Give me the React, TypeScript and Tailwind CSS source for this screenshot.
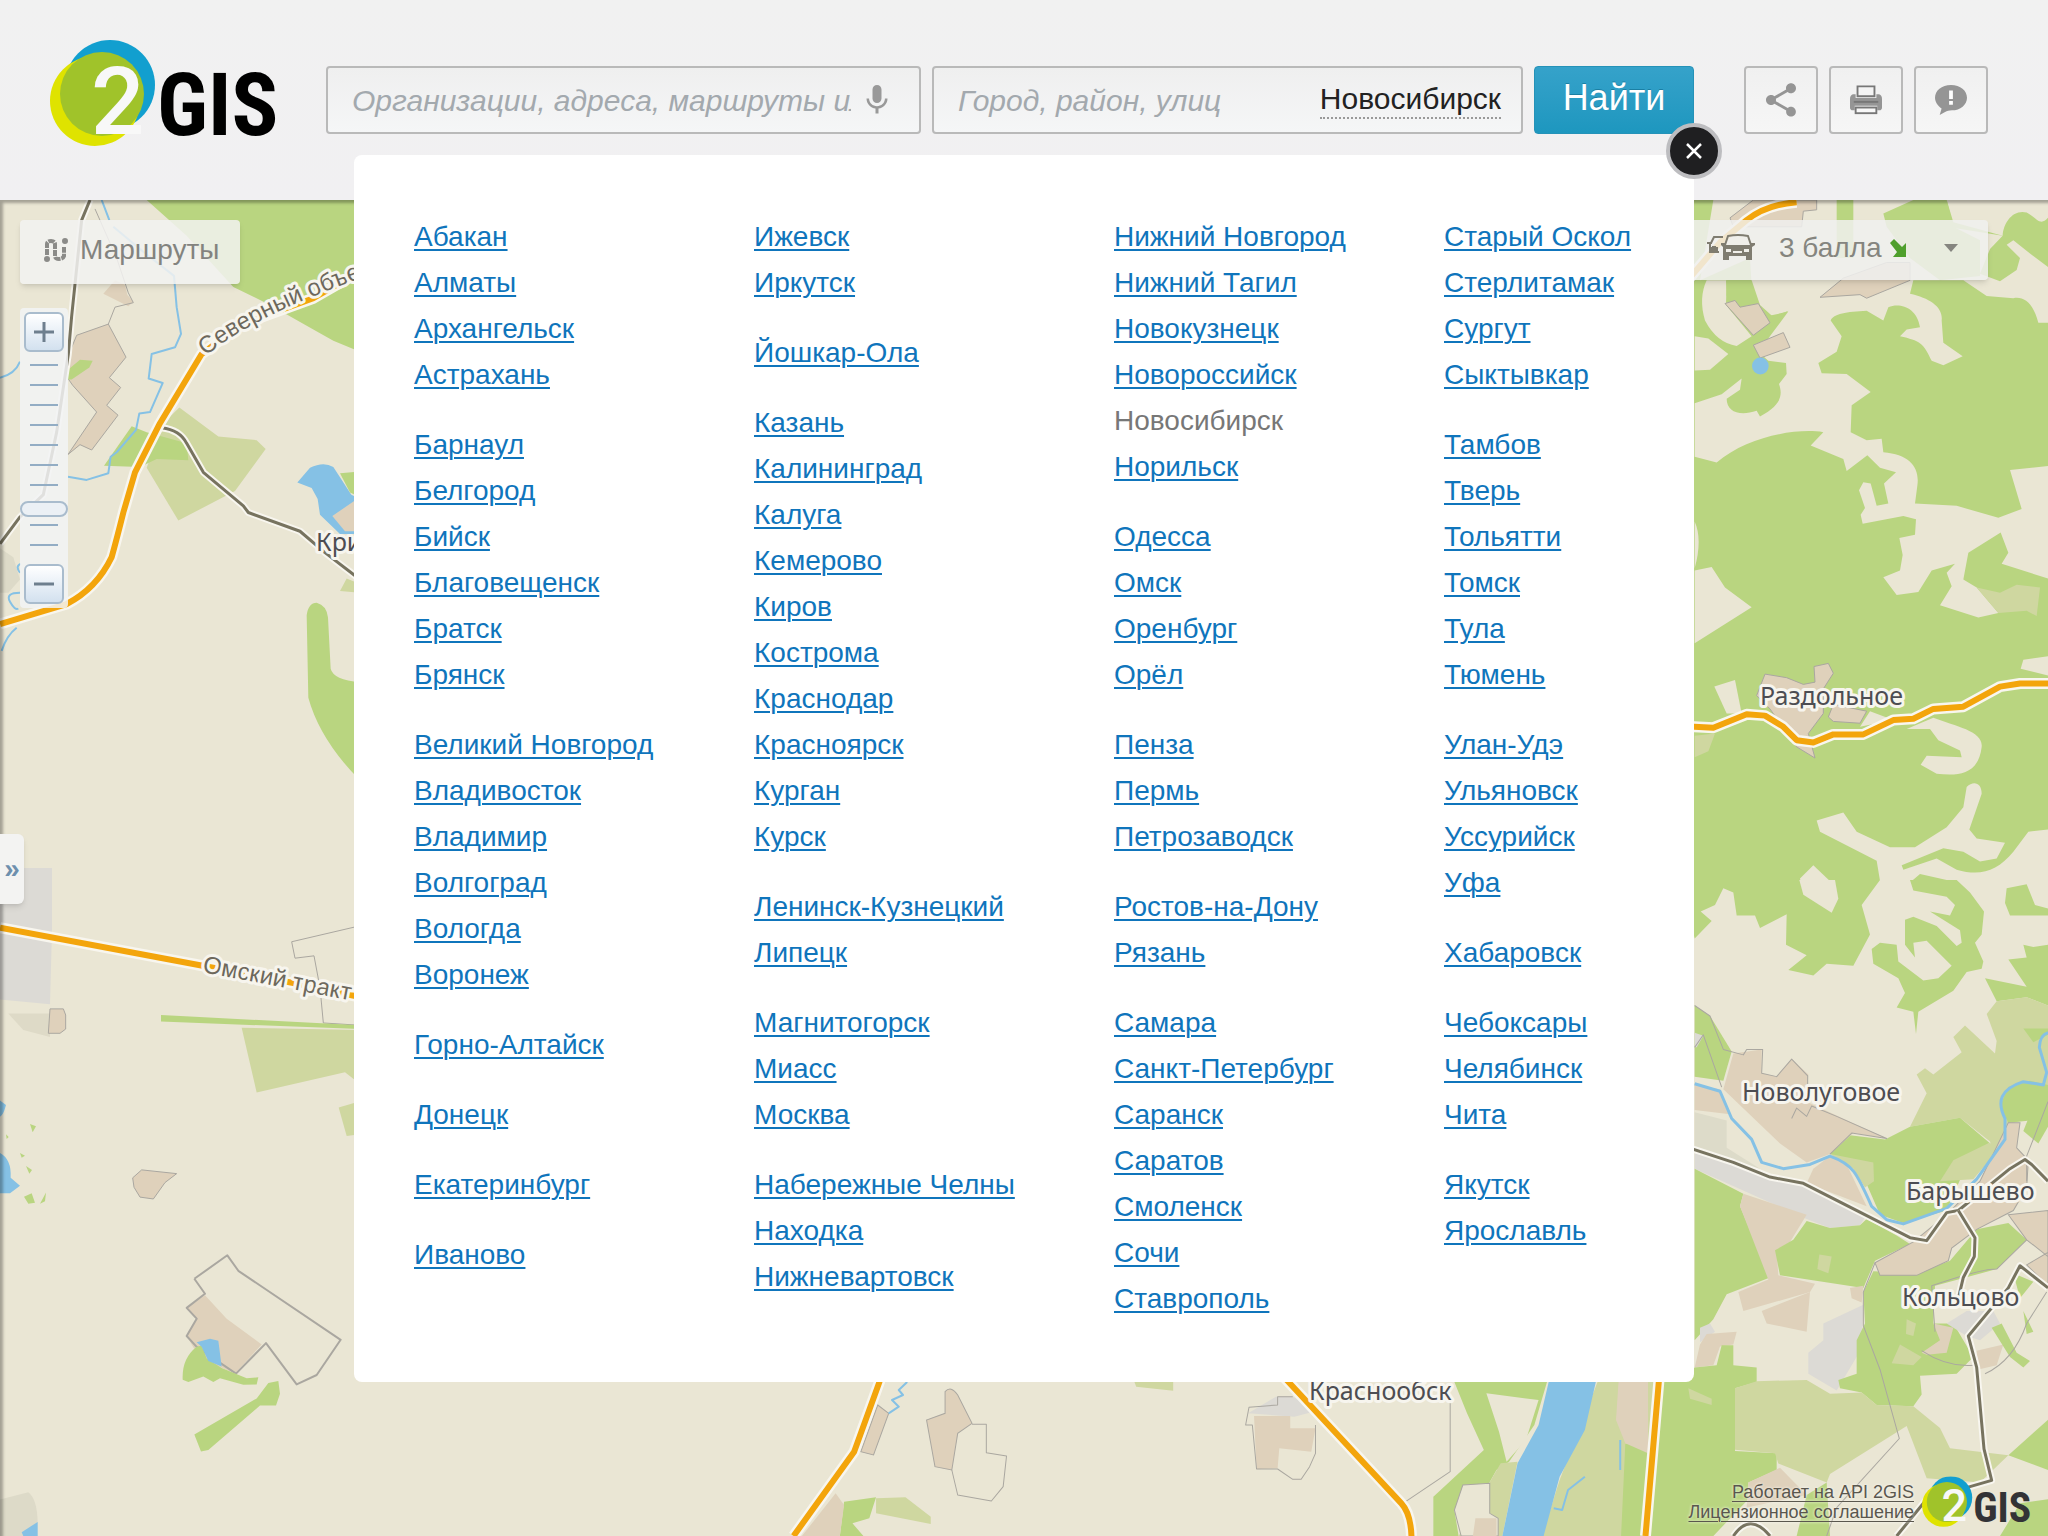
import { useState } from 'react';
import type { ReactNode } from 'react';
import { MdMic, MdShare } from 'react-icons/md';

const CURRENT_CITY = 'Новосибирск';

// Cities by column, then by first letter
const cityColumns: string[][][] = [
  [
    ['Абакан', 'Алматы', 'Архангельск', 'Астрахань'],
    ['Барнаул', 'Белгород', 'Бийск', 'Благовещенск', 'Братск', 'Брянск'],
    ['Великий Новгород', 'Владивосток', 'Владимир', 'Волгоград', 'Вологда', 'Воронеж'],
    ['Горно-Алтайск'],
    ['Донецк'],
    ['Екатеринбург'],
    ['Иваново'],
  ],
  [
    ['Ижевск', 'Иркутск'],
    ['Йошкар-Ола'],
    ['Казань', 'Калининград', 'Калуга', 'Кемерово', 'Киров', 'Кострома', 'Краснодар', 'Красноярск', 'Курган', 'Курск'],
    ['Ленинск-Кузнецкий', 'Липецк'],
    ['Магнитогорск', 'Миасс', 'Москва'],
    ['Набережные Челны', 'Находка', 'Нижневартовск'],
  ],
  [
    ['Нижний Новгород', 'Нижний Тагил', 'Новокузнецк', 'Новороссийск', 'Новосибирск', 'Норильск'],
    ['Одесса', 'Омск', 'Оренбург', 'Орёл'],
    ['Пенза', 'Пермь', 'Петрозаводск'],
    ['Ростов-на-Дону', 'Рязань'],
    ['Самара', 'Санкт-Петербург', 'Саранск', 'Саратов', 'Смоленск', 'Сочи', 'Ставрополь'],
  ],
  [
    ['Старый Оскол', 'Стерлитамак', 'Сургут', 'Сыктывкар'],
    ['Тамбов', 'Тверь', 'Тольятти', 'Томск', 'Тула', 'Тюмень'],
    ['Улан-Удэ', 'Ульяновск', 'Уссурийск', 'Уфа'],
    ['Хабаровск'],
    ['Чебоксары', 'Челябинск', 'Чита'],
    ['Якутск', 'Ярославль'],
  ],
];

const LAND = '#eae6d4';
const FOREST = '#b9d580';
const FIELD = '#cfd7a0';
const TOWN = '#dfd1bb';
const INDUSTRY = '#dcdad5';
const WATER = '#85c1e5';
const OUTLINE = '#aaa7a0';

function Logo({ className, color = '#000' }: { className: string; color?: string }) {
  return (
    <svg viewBox="0 0 230 108" className={className} overflow="visible" role="img" aria-label="2GIS">
      <clipPath id="logo-cut">
        <path d="M0 0H110V83H88L78 94V108H0Z" />
      </clipPath>
      <g clipPath="url(#logo-cut)">
        <circle cx="60" cy="45" r="45" fill="#129fcf" />
        <circle cx="45" cy="61" r="45" fill="#dfe300" />
        <circle cx="52" cy="54" r="42" fill="#a0c32a" />
      </g>
      <text x="41" y="94" fontSize="94" fontWeight="500" fontFamily="Roboto, sans-serif" fill="#f8f8f8">2</text>
      <text x="107" y="95" fontSize="87" fontWeight="700" fontFamily="'Liberation Sans Narrow', 'Roboto Condensed', Roboto, sans-serif" fill={color}>GIS</text>
    </svg>
  );
}

function PrinterIcon() {
  return (
    <svg viewBox="0 0 34 32" className="h-8 w-8" aria-hidden="true">
      <path d="M8 12V1.5H26V12Z" fill="#f4f4f4" stroke="#777" strokeWidth="2" />
      <path d="M3 10H6V14H28V10H31Q34 11 34 15V24Q34 27 31 27H29V22H5V27H3Q0 27 0 24V15Q0 11 3 10Z" fill="#959595" />
      <path d="M4 18H30" stroke="#777" strokeWidth="2" />
      <rect x="6" y="24" width="22" height="6" fill="#f8f8f8" stroke="#777" strokeWidth="2" />
    </svg>
  );
}

function FeedbackIcon() {
  return (
    <svg viewBox="0 0 34 34" className="h-8 w-8" aria-hidden="true">
      <path d="M17 1C27 1 34 7 34 14.5S27 28 18 28C12 28 9 31 5 33L7 26C3 23 0 19 0 14.500C0 7 7 1 17 1Z" fill="#959595" />
      <path d="M17 7V16M17 18V22" stroke="#fff" strokeWidth="4" />
    </svg>
  );
}

function RoutesIcon() {
  return (
    <svg viewBox="0 0 24 24" className="h-6 w-6" fill="none" stroke="#8b8b88" aria-hidden="true">
      <path d="M3 17V6Q3 3 7 3T11 6V18Q11 21 15 21T20 18V9" strokeWidth="4" strokeDasharray="6 1" />
      <circle cx="3" cy="21" r="2" strokeWidth="2" fill="#8b8b88" />
      <circle cx="21" cy="3" r="2" strokeWidth="2" fill="#8b8b88" />
    </svg>
  );
}

function CarsIcon() {
  return (
    <svg viewBox="0 0 48 28" className="h-7 w-12" aria-hidden="true">
      <path d="M4 9L7 3H16M0 9H5M3 10V18H12M5 13H9" fill="none" stroke="#7f7c70" strokeWidth="2" />
      <rect x="3" y="13" width="8" height="5" fill="#7f7c70" />
      <path d="M18 11L21 2Q31 0 41 2L44 11" fill="#f0efe9" fillOpacity="0.6" stroke="#7f7c70" strokeWidth="2" />
      <path d="M14 9H19V11H43V9H48V11L45 13V26H39V22H22V26H16V13L14 11Z" fill="#7f7c70" />
      <path d="M19 15H24V18H19ZM37 15H42V18H37ZM26 17H35V19H26Z" fill="#f0efe9" />
    </svg>
  );
}

type TileProps = { x: number; y: number; width: number; height: number; viewBox: string; children: ReactNode };

function Tile({ viewBox, children, ...box }: TileProps) {
  return (
    <svg {...box} viewBox={viewBox} preserveAspectRatio="none">
      {children}
    </svg>
  );
}

function Area({ d, fill, outlined = false }: { d: string; fill: string; outlined?: boolean }) {
  return <path d={d} fill={fill} stroke={outlined ? OUTLINE : 'none'} strokeWidth="1" vectorEffect="non-scaling-stroke" />;
}

function Line({ d, color, width, casing = 0 }: { d: string; color: string; width: number; casing?: number }) {
  return (
    <g fill="none" strokeLinejoin="round">
      {casing > 0 && <path d={d} stroke="#f8f6ef" strokeWidth={casing} vectorEffect="non-scaling-stroke" />}
      <path d={d} stroke={color} strokeWidth={width} vectorEffect="non-scaling-stroke" />
    </g>
  );
}

function Highway({ d }: { d: string }) {
  return <Line d={d} color="#f3a50c" width={6} casing={11} />;
}

function Road({ d }: { d: string }) {
  return <Line d={d} color="#77735f" width={3} casing={7} />;
}

const places = [
  { name: 'Кри', x: 316, y: 351 },
  { name: 'Раздольное', x: 1760, y: 505 },
  { name: 'Новолуговое', x: 1742, y: 901 },
  { name: 'Барышево', x: 1906, y: 1000 },
  { name: 'Кольцово', x: 1902, y: 1106 },
  { name: 'Краснообск', x: 1309, y: 1200 },
];

function CityMap() {
  return (
    <svg viewBox="0 0 2048 1336" preserveAspectRatio="xMidYMin slice" className="absolute inset-0 h-full w-full" role="img" aria-label="Карта">
      <rect width="2048" height="1336" fill={LAND} />

      {/* North-west */}
      <Tile x={0} y={0} width={360} height={700} viewBox="0 0 1080 1568">
        <Area d="M440 0H1080V340L1000 315L940 290L810 235L700 195L560 80Z" fill={FOREST} />
        <Area d="M230 303L325 278L378 352L328 398L362 420L320 460L354 482L275 560L240 548L204 570L290 475L218 415L204 400V350Z" fill={TOWN} outlined />
        <Area d="M310 210L345 180L375 190L382 212L400 228L385 238Z" fill={TOWN} />
        <Area d="M204 380L240 358L278 360L268 375L215 402H204Z" fill={FOREST} />
        <Area d="M538 465L655 530L770 538L797 558L705 652L535 718L440 600L490 500Z" fill={FIELD} />
        <Area d="M312 595L395 507L440 520L560 545L565 583L470 580L420 598Z" fill={FOREST} />
        <Area d="M892 633L930 600Q970 585 1000 598L1054 660L1080 670V748H1020L960 705L953 670L935 645Z" fill={WATER} />
        <Area d="M1020 612L1080 608V665L1050 655Z" fill={FOREST} />
        <Area d="M997 708L1080 665V742H1035Z" fill={TOWN} />
        <Area d="M920 930Q925 902 950 902Q980 908 984 935L992 1050Q1000 1075 1080 1080V1300Q960 1210 925 1115Z" fill={FOREST} />
        <Area d="M1040 848L1080 860V880L1020 876Z" fill={FIELD} />
        <Area d="M0 1497H156V1568H0Z" fill={INDUSTRY} />
        <Area d="M0 780L40 800L60 850L25 880H0Z" fill="#dddac8" />
        <Line d="M305 0L328 45M340 60L420 110L522 170L530 240L543 300L525 330L455 345L446 400L488 410L450 475L418 478L408 515L350 565L332 575L325 612L260 627L204 620M0 398Q45 390 60 362M5 1010Q20 975 50 958M60 880Q15 880 30 900T55 915M62 815Q45 820 60 835" color={WATER} width={2} />
        <Line d="M285 20L350 130L385 208L400 230L345 240L325 278" color={OUTLINE} width={1} />
        <Road d="M270 0L245 45L215 260L205 345L170 520L130 660L60 710L0 770" />
        <Road d="M485 510Q540 515 560 545L610 610L730 685L745 700L900 742L975 790L1080 850" />
        <Highway d="M0 950L200 905Q290 870 335 800Q350 760 370 700L405 610L480 500L605 345L720 280L940 220L1080 160" />
      </Tile>

      {/* South-west */}
      <Tile x={0} y={600} width={360} height={736} viewBox="0 0 1080 1568">
        <Area d="M0 145H156V275L150 435L0 425Z" fill={INDUSTRY} />
        <Area d="M25 455H150V505L70 490Z" fill="#dedac7" />
        <Area d="M150 445H190L197 458V488L180 497H145Z" fill={TOWN} outlined />
        <Line d="M1080 268L875 302L885 337L942 332L960 400L970 475L1080 480" color={OUTLINE} width={1} />
        <Area d="M725 485L1080 490V605L1035 580L770 623Z" fill={FIELD} />
        <Area d="M483 458L1080 480V488L483 472Z" fill={FOREST} />
        <Area d="M1016 655L1080 642V712L1040 716Z" fill={FIELD} />
        <Area d="M0 640L18 650Q10 672 0 675ZM0 752Q35 765 32 805L60 822L30 838H0Z" fill={WATER} />
        <Area d="M90 690L108 695L98 708ZM60 752L75 758L65 762ZM78 780L96 788L88 796ZM72 845L95 838L105 858L85 860ZM120 860L138 836L135 855ZM18 712L26 718L20 722Z" fill={FOREST} />
        <Area d="M398 805L425 788L530 796L495 815L460 850L420 846L402 825Z" fill={TOWN} outlined />
        <Area d="M615 1055L680 1105L785 1160L705 1222L600 1190L560 1142L590 1105L560 1082Z" fill={TOWN} />
        <Line d="M583 1020L682 970L715 1003L1022 1150L950 1225L890 1245L798 1157L708 1222L590 1165L560 1142L590 1105L560 1082L615 1052L583 1020" color={OUTLINE} width={2} />
        <Area d="M548 1235Q545 1190 590 1165L605 1162L620 1190L665 1210L740 1232L775 1230L770 1245L730 1246L660 1232L640 1240L610 1228L565 1240Z" fill={FOREST} />
        <Area d="M590 1155L630 1148L655 1152L665 1207L625 1195L605 1165Z" fill={WATER} />
        <Area d="M583 1352L770 1275L805 1242L835 1238L840 1265L828 1290L780 1290L625 1385L603 1388Z" fill={FOREST} />
        <Area d="M0 1490L85 1475Q112 1490 113 1540L70 1568H0Z" fill="#dddac8" />
        <Area d="M65 1560L113 1538V1568H70Z" fill={WATER} />
        <Highway d="M0 272L600 352L880 390L1080 420" />
      </Tile>

      {/* Strip below the city list */}
      <Tile x={360} y={1170} width={1320} height={166} viewBox="0 0 1568 498">
        <Area d="M615 105L628 130L610 255L595 245Z" fill={TOWN} outlined />
        <Area d="M695 65Q702 45 710 75L727 160L710 190L703 300L683 290L673 150L695 130Z" fill={TOWN} outlined />
        <Line d="M727 163H744V248L768 258L764 350L750 393L710 375L703 300" color={OUTLINE} width={1} />
        <Area d="M575 395L613 382L605 445L585 460L598 498H570Z" fill={FOREST} />
        <Area d="M613 385L648 382L678 440V462L613 430Z" fill={FIELD} />
        <Area d="M565 370L575 405L570 498H525Z" fill={TOWN} />
        <Area d="M920 36H966V62L922 50Z" fill={FIELD} />
        <Area d="M1088 80H1108L1140 120L1110 140L1055 130Z" fill={INDUSTRY} />
        <Area d="M1062 138H1105V175H1135L1130 245L1092 235L1090 295L1065 298Z" fill={TOWN} />
        <Line d="M1108 80H1090V105L1056 112L1052 165H1060L1065 297H1090L1108 328H1118L1128 290L1135 250V165M1295 100V305L1242 395" color={OUTLINE} width={1} />
        <Area d="M1300 36H1410L1395 165L1365 275L1350 300L1340 345L1310 350L1300 420L1305 498H1275V380L1335 240L1315 130Z" fill={FOREST} />
        <Area d="M1338 70L1400 90L1385 210L1362 275L1353 185Z" fill={LAND} />
        <Area d="M1355 280L1375 275L1357 498H1305L1340 345Z" fill={FIELD} />
        <Area d="M1470 36H1568V498H1404L1425 330Z" fill={FIELD} />
        <Area d="M1503 222H1568V498H1498ZM1545 36H1568V222H1535Z" fill={FOREST} />
        <Area d="M1495 36H1530V250L1503 220L1492 150Z" fill={TOWN} />
        <Area d="M1412 36H1468L1455 180L1425 320L1406 498H1357L1375 280L1400 165Z" fill={WATER} />
        <Line d="M650 36L640 60L645 75L632 90L640 110L628 130M1455 320L1435 360L1428 420L1418 415M1497 210V300" color={WATER} width={2} />
        <Area d="M1310 345L1342 340V430L1352 445V498H1308L1300 420Z" fill={LAND} outlined />
        <Area d="M1325 445H1350V498H1322Z" fill={TOWN} />
        <Highway d="M621 0L617 36L587 245L515 498" />
        <Highway d="M1090 0L1103 36L1237 400Q1248 430 1249 498" />
        <Highway d="M1544 0L1542 60L1527 498" />
      </Tile>

      {/* North-east */}
      <Tile x={1680} y={0} width={368} height={700} viewBox="0 0 1104 1568">
        <rect x="0" width="1104" height="1568" fill={FOREST} />
        <Area d="M100 0H470V130H520V0H800V60L968 80L930 110L900 165L960 182L1010 157L1020 130L980 100L1000 90L1050 120L1104 150V275H1075C1060 230 1030 215 1000 220L920 215L850 180H700L690 210C750 220 790 240 785 270L790 320L848 350L790 370L755 360C730 320 720 315 660 305L680 290L720 285C710 240 660 230 625 240L610 270L560 248C500 250 460 255 452 270L485 305L470 340L415 365L425 388L500 390L572 430L515 460L512 520L560 538L605 535L610 565C690 570 720 600 712 640L705 680L830 685L955 712L1025 692L990 605L1104 596V848L965 815L985 790L962 745L865 790L850 850L890 868L955 925L895 935L780 908L815 865L800 835L825 815L755 830L715 878L650 885L610 845L660 830L668 795L658 757L705 750L708 715L670 708L548 725L542 705L555 690L537 650L550 632L572 635L590 685L625 680L612 635L648 610L600 600L562 572L500 607L490 580L392 550L430 520C350 510 200 530 110 588L44 575V455L125 435L185 400L180 425L140 445C140 475 180 485 230 472L240 485C300 460 310 440 297 412L320 390L318 365L265 360L235 340L325 250L250 262L215 195L210 130L60 180Z" fill={LAND} />
        <Area d="M800 0H1104V40C1080 60 1070 40 1040 28C1000 20 970 50 968 80L820 50Z" fill={LAND} />
        <Area d="M610 30L700 0H800L820 60L900 90V170L780 180L690 130L620 60Z" fill={FOREST} />
        <Area d="M80 180Q55 220 75 270Q110 320 170 327L215 305L138 235L140 180Z" fill={LAND} />
        <Area d="M138 180H215L240 235L280 262L325 248L270 285L215 300L180 240L140 215Z" fill={FOREST} />
        <Area d="M44 305L85 310L145 345L90 380L44 382Z" fill={LAND} />
        <Area d="M44 720Q68 760 44 825ZM44 830L95 822L135 868L215 912L44 993Z" fill={LAND} />
        <Area d="M150 40L220 0H410V22L370 25L365 60H160Z" fill={TOWN} outlined />
        <Area d="M420 218L490 175L620 140H690V180L560 220L540 212Z" fill={TOWN} outlined />
        <Area d="M135 232L165 225L180 240L235 232L270 275L220 303Z" fill={TOWN} outlined />
        <Area d="M220 325L310 297L330 330L240 354Z" fill={TOWN} outlined />
        <ellipse cx="241" cy="372" rx="25" ry="19" fill={WATER} />
        <Area d="M890 868L960 880L1010 862L1080 868L1070 932L1040 920L955 925Z" fill={FIELD} />
        <Area d="M103 1090L165 1075L185 1150H140Z" fill={LAND} />
        <Area d="M255 1062L320 1070L370 1085L405 1080L402 1045L445 1038L460 1060L430 1095V1150L385 1195L405 1250L350 1225L270 1140L230 1110Z" fill={TOWN} outlined />
        <Area d="M445 1158L460 1130L560 1145L540 1172L460 1168Z" fill={TOWN} outlined />
        <Area d="M680 1185L760 1160C830 1180 910 1190 905 1225C895 1290 830 1290 770 1285L722 1265L740 1245L845 1248L840 1233L775 1210L750 1185ZM540 1180L570 1145L640 1165Z" fill={LAND} />
        <Area d="M1104 1022L1030 1030L1022 1050L1104 1065Z" fill={LAND} />
        <Area d="M44 1200L105 1195L85 1235L44 1248Z" fill={FIELD} />
        <Area d="M410 1390L490 1372L530 1415L630 1450H705L800 1405L850 1360L860 1315C880 1300 905 1305 905 1330L868 1410L890 1430L975 1440L950 1475L900 1482L850 1460L790 1452L665 1490L670 1500L770 1475L830 1500C900 1515 950 1505 1000 1460L1045 1415L1104 1410V1568H1060L1045 1540L975 1545L980 1568H880L840 1530L720 1510L688 1530L695 1568H550L600 1525L590 1480L420 1415Z" fill={LAND} />
        <Area d="M360 1520L400 1490L470 1540V1568H375Z" fill={LAND} />
        <Highway d="M0 200L120 95L200 45Q260 10 350 5" />
        <Highway d="M0 1178L100 1182L200 1152L255 1155L310 1180L350 1210L400 1215L460 1197H550L640 1165L700 1162L760 1140L850 1135L960 1090L1020 1083H1104" />
      </Tile>

      {/* South-east */}
      <Tile x={1680} y={680} width={368} height={656} viewBox="0 0 1104 1568">
        <rect x="0" y="0" width="1104" height="1568" fill={LAND} />
        <Area d="M0 0H600L545 60L570 130L520 205L440 200L400 228L325 215L380 180L318 155L320 82L240 115L225 85H170L160 30L130 20L105 60L62 75L95 98L44 140Z" fill={FOREST} />
        <Area d="M358 0H465L475 45L455 78L370 35Z" fill={LAND} />
        <Area d="M690 0H830L870 30L912 75L905 130L885 150L910 195L905 212L860 220L820 265L715 315L708 368L700 315L650 305L675 270L655 235L580 200L575 165L600 150L650 155L655 195L730 240L775 235L815 205L740 145L700 150L705 185L675 155V95L700 88L770 110L830 158L845 150L840 120L750 75L810 85L825 60L800 40L700 25Z" fill={FOREST} />
        <Area d="M980 20L1040 10L1065 60L1104 68V85H990L975 55Z" fill={FOREST} />
        <Area d="M1104 155V300L1040 280L950 290L915 235L1040 255L985 190L1040 185L1030 155L1060 160Z" fill={FOREST} />
        <Area d="M950 290L1040 280L1104 300V560L1000 580L960 700L930 625L840 568L690 590L740 510L710 465L735 450L760 465L845 412L820 375L855 348L945 415L950 385L920 320Z" fill={FIELD} />
        <Area d="M1030 355H1104V370L1060 388Z" fill={FOREST} />
        <Area d="M690 590L840 568L928 628L860 680L800 790L670 820L600 800L540 690L450 655L510 610L615 620Z" fill={FOREST} />
        <Area d="M928 628L820 670L780 720L880 715L960 640Z" fill={FIELD} />
        <Area d="M450 655L580 675L582 720L555 735L520 690Z" fill={FIELD} />
        <Area d="M985 495L1050 480L1104 490V530L1050 575L985 580L960 540Z" fill={FOREST} />
        <Area d="M44 300L90 325L155 410L130 480L44 470Z" fill={FOREST} />
        <Area d="M44 365L70 372L50 400H44Z" fill={INDUSTRY} />
        <Area d="M160 415L245 405V462L290 470L335 428L385 465L380 530L620 618L520 605L450 655L380 675L300 630L130 500Z" fill={TOWN} />
        <Area d="M44 490L120 500L150 560L44 550Z" fill={TOWN} />
        <Area d="M44 555L140 575V640L240 690L150 670L44 640Z" fill="#dddbc9" />
        <Area d="M450 660L500 680L560 780L380 725L400 690Z" fill={TOWN} />
        <Area d="M44 645L280 710L400 735L560 800L540 825L450 832L380 810L44 690Z" fill={INDUSTRY} />
        <Area d="M44 690L190 750L180 780L270 950L140 990L100 1050L44 1100Z" fill={FOREST} />
        <Area d="M190 750L380 800L330 865L290 885L295 945L405 965L390 985L190 1030L175 985L265 955L180 780Z" fill={TOWN} />
        <Area d="M380 815L450 832L540 825L560 810L650 850L690 870L585 910L550 975L300 945L285 885L340 860Z" fill={FOREST} />
        <Area d="M418 895L455 900L445 940L412 930Z" fill={FIELD} />
        <Area d="M245 1030L390 985L380 1080L260 1060ZM510 975L550 970L545 1010L515 1000Z" fill={TOWN} />
        <Area d="M430 1060L550 1015L545 1120L470 1220L385 1180V1130L430 1100ZM60 1070L90 1060L105 1080L60 1105Z" fill={INDUSTRY} />
        <Area d="M580 935L550 985L555 1060L530 1100V1180L475 1195L480 1215L545 1225L590 1255L700 1258L725 1230L720 1185L830 1180L880 1140L820 1060L760 1060L765 970L950 930L1040 860L985 820L890 835L810 910L710 940Z" fill={FOREST} />
        <Area d="M660 1110L725 1140L700 1160L635 1155ZM680 1050L708 1060L700 1090L678 1085Z" fill={FIELD} />
        <Area d="M725 1130L780 1100L760 1060L820 1070L800 1130L740 1135ZM890 1125L970 1110L950 1160L895 1170Z" fill={TOWN} />
        <Area d="M800 1060L860 1030L940 1030L960 1060L900 1100L860 1090Z" fill={INDUSTRY} />
        <Area d="M935 1070L965 1060L1010 1130L1050 1150L1030 1165L990 1140ZM1030 1030L1060 1080L1040 1085ZM1000 940L1060 960L1020 1000Z" fill={FOREST} />
        <Area d="M985 800L1104 790V900L1040 860ZM1040 920L1104 890V970Z" fill={TOWN} outlined />
        <Area d="M1050 560L1104 530V590L1075 630L1030 600Z" fill={FOREST} />
        <Area d="M585 915L700 865L800 800L900 720L985 580L1020 580L1010 640L1045 670L1040 735L1000 790L890 835L815 880L805 910L710 945L600 945Z" fill={TOWN} outlined />
        <Area d="M44 1165L60 1110L80 1085L170 1080L160 1110L120 1115L100 1160Z" fill={TOWN} />
        <Area d="M0 1200L44 1165L110 1160L125 1112H160V1160L230 1165V1200L165 1215V1365L290 1370V1410L205 1440V1480L100 1568H0Z" fill={FOREST} />
        <Area d="M165 1215L230 1198L380 1195L450 1228L545 1225L590 1255L700 1258L780 1310L810 1358L985 1375L900 1440L740 1430L680 1305L450 1420L440 1440L295 1395L285 1370L165 1362Z" fill={FIELD} />
        <Area d="M25 1215L95 1240V1255L30 1240Z" fill={FIELD} />
        <Area d="M205 1440L300 1405L380 1470L200 1500Z" fill={TOWN} />
        <Area d="M380 1470L440 1440L450 1568H350ZM1104 1480L1020 1490L960 1568H1104Z" fill={FOREST} />
        <Area d="M1104 1290V1410L985 1375Z" fill={FOREST} />
        <Line d="M44 300L90 325L130 405L190 418L200 405H248L245 462L290 470L335 428L383 468V510M335 570L350 545L380 565L395 540L470 565L620 618L515 605L450 655M44 400L70 370L125 495M585 915L550 985V1065L600 1170L658 1335L470 1500L440 1568M765 1080L755 970Q900 930 950 930L1040 860M725 1125Q800 1165 880 1160M915 1180Q1000 1150 1040 1060L1100 985M1104 530L1040 660V720" color={OUTLINE} width={1} />
        <Line d="M44 487L120 505L155 570L215 620L245 675L310 690L390 680L450 660C520 680 530 700 575 780L620 812L670 822L800 785L890 715L975 620V570C950 530 960 500 1030 482L1090 490L1100 460L1078 400Q1080 370 1104 365" color={WATER} width={3} />
        <Road d="M0 633L160 675L270 710L370 725L690 855L740 862L800 795L835 790L990 690L1035 668L1055 680L1104 720" />
        <Road d="M835 790L885 855L883 900L850 950L835 1000" />
        <Road d="M1104 975L1020 922L985 975L865 1090L890 1165L912 1360L935 1435L740 1480L650 1568" />
        <Road d="M160 1568Q210 1510 270 1568" />
      </Tile>

      <g fontFamily="'Noto Sans', sans-serif" fill="#4d4d52" stroke="#f7f5ee" strokeWidth="6" strokeLinejoin="round" paintOrder="stroke">
        {places.map(p => (
          <text key={p.name} x={p.x} y={p.y} fontSize="25">{p.name}</text>
        ))}
        <path id="north-road" d="M206 156Q250 118 356 80" fill="none" stroke="none" />
        <path id="omsk-road" d="M202 772L380 806" fill="none" stroke="none" />
        <g fontFamily="'Liberation Sans', sans-serif" fill="#6d685c">
          <text fontSize="24"><textPath href="#north-road">Северный объе</textPath></text>
          <text fontSize="24"><textPath href="#omsk-road">Омский тракт</textPath></text>
        </g>
      </g>
    </svg>
  );
}

function Header() {
  return (
    <header className="flex h-[200px] items-start bg-linear-to-b from-[#f1f1f1] to-[#f1f0f2] pr-[60px] pl-[50px]">
      <a href="#" className="mt-10 mr-[46px] shrink-0">
        <Logo className="h-[108px] w-[230px]" />
      </a>

      <form className="mt-[66px] flex min-w-0 flex-1 gap-[11px]" onSubmit={e => e.preventDefault()}>
        <div className="flex h-[68px] min-w-0 flex-1 items-center rounded-sm border-2 border-[#b9b9b9] bg-linear-to-b from-[#efefef] to-[#f5f6f7] pr-6 pl-6">
          <input
            type="text"
            aria-label="Что искать"
            placeholder="Организации, адреса, маршруты или остановки"
            className="min-w-0 flex-1 bg-transparent text-[30px] italic outline-none placeholder:text-[#a3a9ae]"
          />
          <button type="button" aria-label="Голосовой поиск" className="ml-2">
            <MdMic className="h-9 w-9 text-[#999]" />
          </button>
        </div>
        <div className="flex h-[68px] min-w-0 flex-1 items-center rounded-sm border-2 border-[#b9b9b9] bg-linear-to-b from-[#efefef] to-[#f5f6f7] pr-5 pl-6">
          <input
            type="text"
            aria-label="Где искать"
            placeholder="Город, район, улиц"
            className="min-w-0 flex-1 bg-transparent text-[30px] italic outline-none placeholder:text-[#a3a9ae]"
          />
          <button type="button" className="border-b-2 border-dotted border-[#999] text-[30px] leading-9 text-[#222]">{CURRENT_CITY}</button>
        </div>
        <button type="submit" className="h-[68px] w-40 rounded-sm border border-[#2592b8] bg-linear-to-b from-[#35a2ca] to-[#1d97bf] pb-1 text-[36px] text-white [text-shadow:0_-1px_0_#1b7fa3]">
          Найти
        </button>
      </form>

      <div className="mt-[66px] ml-[50px] flex gap-[11px]">
        <button aria-label="Поделиться" className="flex h-[68px] w-[74px] items-center justify-center rounded-sm border-2 border-[#b9b9b9] bg-linear-to-b from-[#f0f0f0] to-[#f6f6f6]">
          <MdShare className="h-10 w-10 text-[#959595]" />
        </button>
        <button aria-label="Печать" className="flex h-[68px] w-[74px] items-center justify-center rounded-sm border-2 border-[#b9b9b9] bg-linear-to-b from-[#f0f0f0] to-[#f6f6f6]">
          <PrinterIcon />
        </button>
        <button aria-label="Сообщить об ошибке" className="flex h-[68px] w-[74px] items-center justify-center rounded-sm border-2 border-[#b9b9b9] bg-linear-to-b from-[#f0f0f0] to-[#f6f6f6]">
          <FeedbackIcon />
        </button>
      </div>
    </header>
  );
}

function ZoomControl() {
  const [zoom, setZoom] = useState(24);

  return (
    <div className="absolute top-[108px] left-5 flex w-12 flex-col items-center rounded bg-[#f2f3f4]/85 py-1">
      <button aria-label="Приблизить" onClick={() => setZoom(z => Math.min(100, z + 10))} className="flex h-10 w-10 items-center justify-center rounded-md border-2 border-[#a9bccd] bg-linear-to-b from-white to-[#d3e1ef]">
        <svg viewBox="0 0 20 20" className="h-5 w-5" aria-hidden="true"><path d="M10 0V20M0 10H20" stroke="#6e7f8e" strokeWidth="3" /></svg>
      </button>
      <input
        type="range"
        aria-label="Масштаб"
        value={zoom}
        onChange={e => setZoom(Number(e.target.value))}
        className="h-[212px] w-12 appearance-none bg-[repeating-linear-gradient(to_bottom,transparent_0_12px,#93adc4_12px_14px,transparent_14px_20px)] bg-[length:28px_200px] bg-top bg-no-repeat [direction:rtl] [writing-mode:vertical-lr] [&::-webkit-slider-thumb]:h-4 [&::-webkit-slider-thumb]:w-12 [&::-webkit-slider-thumb]:appearance-none [&::-webkit-slider-thumb]:rounded-full [&::-webkit-slider-thumb]:border-2 [&::-webkit-slider-thumb]:border-[#a9bccd] [&::-webkit-slider-thumb]:bg-[#ebf0f5]"
      />
      <button aria-label="Отдалить" onClick={() => setZoom(z => Math.max(0, z - 10))} className="flex h-10 w-10 items-center justify-center rounded-md border-2 border-[#a9bccd] bg-linear-to-b from-white to-[#d3e1ef]">
        <svg viewBox="0 0 20 20" className="h-5 w-5" aria-hidden="true"><path d="M0 10H20" stroke="#6e7f8e" strokeWidth="3" /></svg>
      </button>
    </div>
  );
}

function CityDialog({ onClose }: { onClose: () => void }) {
  return (
    <div role="dialog" aria-label="Выбор города" className="relative mx-auto -mt-[45px] w-[1340px] max-w-full rounded-lg bg-white px-[60px] pt-[59px] pb-[60px]">
      <button aria-label="Закрыть" onClick={onClose} className="absolute -top-8 -right-7 flex h-14 w-14 items-center justify-center rounded-full border-4 border-[#bdbdc0] bg-[#1f1f21]">
        <svg viewBox="0 0 16 16" className="h-4 w-4" aria-hidden="true"><path d="M1 1L15 15M15 1L1 15" stroke="#fff" strokeWidth="2.5" /></svg>
      </button>
      <div className="grid grid-cols-[340fr_360fr_330fr_190fr] text-[28px] leading-[46px] whitespace-nowrap">
        {cityColumns.map((groups, i) => (
          <div key={i} className="flex flex-col gap-6">
            {groups.map(group => (
              <ul key={group[0]}>
                {group.map(city => (
                  <li key={city}>
                    {city === CURRENT_CITY
                      ? <span className="text-[#777]">{city}</span>
                      : <a href="#" className="text-[#0f75bc] underline decoration-2 underline-offset-3 hover:text-[#d33]">{city}</a>}
                  </li>
                ))}
              </ul>
            ))}
          </div>
        ))}
      </div>
    </div>
  );
}

export default function App() {
  const [open, setOpen] = useState(true);

  return (
    <div className="flex min-h-screen flex-col bg-[#f1f1f1] font-['Liberation_Sans',Arial,sans-serif]">
      <Header />

      <main className="relative flex-1">
        <CityMap />
        <div className="pointer-events-none absolute inset-0 shadow-[inset_3px_3px_3px_rgba(0,0,0,0.3)]" />

        <button className="absolute top-5 left-5 flex h-16 w-[220px] items-center gap-3 rounded bg-[#f2f2f1]/85 pb-1 pl-6 text-[28px] text-[#83837f] shadow-md">
          <RoutesIcon />
          Маршруты
        </button>
        <ZoomControl />
        <button aria-label="Показать панель" className="absolute top-[634px] left-0 h-[70px] w-6 rounded-r-md bg-[#f3f3f2] text-[28px] font-bold text-[#6d8fad] shadow-md">»</button>

        <button className="absolute top-5 right-[60px] flex h-[60px] w-[320px] items-center rounded bg-[#f0f0ef]/85 pb-1 pl-[39px] text-[28px] text-[#85857f] shadow-md">
          <CarsIcon />
          <span className="ml-6">3 балла</span>
          <svg viewBox="0 0 18 18" className="ml-2 h-[18px] w-[18px]" aria-hidden="true"><path d="M0 4L4 0L12 8L16 4V18H3L7 13Z" fill="#4f9f2c" /></svg>
          <svg viewBox="0 0 14 8" className="ml-9 h-2 w-[14px]" aria-hidden="true"><path d="M0 0H14L7 8Z" fill="#85857f" /></svg>
        </button>

        <div className="absolute right-4 bottom-2 flex items-center gap-2">
          <div className="flex flex-col items-end text-[18px] leading-5 text-[#5a574e] [text-shadow:0_0_3px_#fff]">
            <a href="#" className="underline decoration-1 underline-offset-3">Работает на API 2GIS</a>
            <a href="#" className="underline decoration-1 underline-offset-3">Лицензионное соглашение</a>
          </div>
          <Logo className="h-[52px] w-[110px]" color="#333336" />
        </div>

        {open && <CityDialog onClose={() => setOpen(false)} />}
      </main>
    </div>
  );
}
